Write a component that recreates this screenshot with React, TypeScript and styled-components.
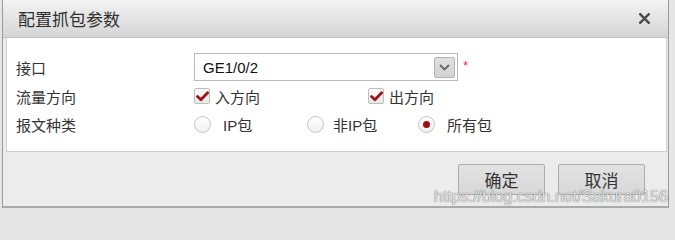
import styled, { createGlobalStyle } from 'styled-components';
import { FC } from 'react';

const GlobalStyle = createGlobalStyle`
  html, body {
    margin: 0;
    padding: 0;
    background: #e6e6e6;
  }
  body {
    font-family: "Noto Sans CJK SC", "Liberation Sans", sans-serif;
    color: #333;
  }
`;

const Page = styled.div`
  width: 675px;
  height: 217px;
  padding-left: 2px;
  box-sizing: border-box;
`;

const Dialog = styled.div`
  position: relative;
  width: 667px;
  height: 208px;
  box-sizing: border-box;
  background: #ececec;
  border-left: 1px solid #9a9a9a;
  border-right: 1px solid #9a9a9a;
  border-bottom: 2px solid #a9a9a9;
  display: flex;
  flex-direction: column;
`;

const TitleBar = styled.div`
  height: 37px;
  flex-shrink: 0;
  display: flex;
  align-items: center;
  justify-content: space-between;
  padding: 0 17px 0 15px;
  background: linear-gradient(to bottom, #f3f3f3, #d5d5d5);
  border-bottom: 1px solid #c2c2c2;
`;

const Title = styled.span`
  font-size: 17px;
  color: #2e2e2e;
`;

const CloseButton = styled.button`
  width: 14px;
  height: 14px;
  padding: 0;
  border: 0;
  background: transparent;
  display: flex;
  align-items: center;
  justify-content: center;
  cursor: pointer;
`;

const Panel = styled.div`
  margin: 0 1px 0 3px;
  height: 114px;
  box-sizing: border-box;
  background: #fff;
  border: 1px solid #cfcfcf;
  border-top: 0;
  padding: 15px 0 0 9px;
  display: flex;
  flex-direction: column;
  gap: 2px;
`;

const Row = styled.div<{ $h: number }>`
  display: flex;
  align-items: center;
  height: ${({ $h }) => $h}px;
`;

const Label = styled.span`
  width: 178px;
  flex-shrink: 0;
  font-size: 15px;
  color: #333;
`;

const Select = styled.div`
  width: 264px;
  height: 28px;
  box-sizing: border-box;
  border: 1px solid #b9b9b9;
  background: #fff;
  display: flex;
  align-items: center;
  justify-content: space-between;
  padding: 0 2px 0 8px;
`;

const SelectValue = styled.span`
  font-family: "Liberation Sans", Arial, sans-serif;
  font-size: 15px;
  color: #111;
`;

const SelectArrow = styled.span`
  width: 21px;
  height: 21px;
  box-sizing: border-box;
  border: 1px solid #b3b3b3;
  border-radius: 2px;
  background: linear-gradient(to bottom, #e0e0e0, #d2d2d2);
  display: flex;
  align-items: center;
  justify-content: center;
`;

const Required = styled.span`
  color: #ff2a2a;
  font-size: 13px;
  margin-left: 5px;
  align-self: flex-start;
  margin-top: 5px;
  font-family: "Liberation Sans", sans-serif;
`;

const Option = styled.label<{ $w: number; $gap: number }>`
  width: ${({ $w }) => $w}px;
  display: flex;
  align-items: center;
  gap: ${({ $gap }) => $gap}px;
  font-size: 15px;
  color: #333;
`;

const CheckBox = styled.span`
  width: 16px;
  height: 16px;
  box-sizing: border-box;
  border: 1px solid #bdbdbd;
  border-radius: 2px;
  background: linear-gradient(to bottom, #fafafa, #e9e9e9);
  display: flex;
  align-items: center;
  justify-content: center;
`;

const Radio = styled.span<{ $on?: boolean }>`
  width: 17px;
  height: 17px;
  box-sizing: border-box;
  border: 1px solid #c4c4c4;
  border-radius: 50%;
  background: linear-gradient(to bottom, #ffffff, #f0f0f0);
  display: flex;
  align-items: center;
  justify-content: center;
  &::after {
    content: '';
    display: ${({ $on }) => ($on ? 'block' : 'none')};
    width: 7px;
    height: 7px;
    border-radius: 50%;
    background: #a50d0d;
  }
`;

const Latin = styled.span`
  font-family: "Liberation Sans", Arial, sans-serif;
`;

const Footer = styled.div`
  flex: 1;
  display: flex;
  justify-content: flex-end;
  align-items: flex-start;
  gap: 13px;
  padding: 12px 23px 0 0;
`;

const Button = styled.button`
  width: 87px;
  height: 31px;
  box-sizing: border-box;
  border: 1px solid #ababab;
  border-radius: 2px;
  background: linear-gradient(to bottom, #e2e2e2, #d8d8d8);
  font-family: "Noto Sans CJK SC", sans-serif;
  font-size: 17px;
  color: #333;
  padding: 0;
  cursor: pointer;
`;

const Watermark = styled.span`
  position: absolute;
  left: 431px;
  bottom: 0px;
  font-family: "Liberation Sans", Arial, sans-serif;
  font-size: 16px;
  color: rgba(255, 255, 255, 0.85);
  text-shadow: 0 0 1px rgba(0, 0, 0, 0.55), 0 0 1px rgba(0, 0, 0, 0.35);
  pointer-events: none;
  white-space: nowrap;
`;

const Check: FC = () => (
  <svg width="13" height="11" viewBox="0 0 13 11">
    <path d="M1.5 5.6 L4.9 8.8 L11.6 1.8" fill="none" stroke="#a3141a" strokeWidth="2.8" strokeLinecap="round" strokeLinejoin="round" />
  </svg>
);

const App: FC = () => (
  <Page>
    <GlobalStyle />
    <Dialog>
      <TitleBar>
        <Title>配置抓包参数</Title>
        <CloseButton title="关闭">
          <svg width="11" height="11" viewBox="0 0 11 11">
            <path d="M1.2 1.2 L9.8 9.8 M9.8 1.2 L1.2 9.8" stroke="#4a4a4a" strokeWidth="2.4" strokeLinecap="square" />
          </svg>
        </CloseButton>
      </TitleBar>
      <Panel>
        <Row $h={28}>
          <Label>接口</Label>
          <Select>
            <SelectValue>GE1/0/2</SelectValue>
            <SelectArrow>
              <svg width="11" height="7" viewBox="0 0 11 7">
                <path d="M1 1 L5.5 5.5 L10 1" fill="none" stroke="#666" strokeWidth="1.8" />
              </svg>
            </SelectArrow>
          </Select>
          <Required>*</Required>
        </Row>
        <Row $h={26}>
          <Label>流量方向</Label>
          <Option $w={174} $gap={5}>
            <CheckBox><Check /></CheckBox>入方向
          </Option>
          <Option $w={120} $gap={5}>
            <CheckBox><Check /></CheckBox>出方向
          </Option>
        </Row>
        <Row $h={26}>
          <Label>报文种类</Label>
          <Option $w={113} $gap={12}>
            <Radio /><span><Latin>IP</Latin>包</span>
          </Option>
          <Option $w={111} $gap={9}>
            <Radio /><span>非<Latin>IP</Latin>包</span>
          </Option>
          <Option $w={100} $gap={12}>
            <Radio $on />所有包
          </Option>
        </Row>
      </Panel>
      <Footer>
        <Button>确定</Button>
        <Button>取消</Button>
      </Footer>
      <Watermark>https://blog.csdn.net/Sakura0156</Watermark>
    </Dialog>
  </Page>
);

export default App;
